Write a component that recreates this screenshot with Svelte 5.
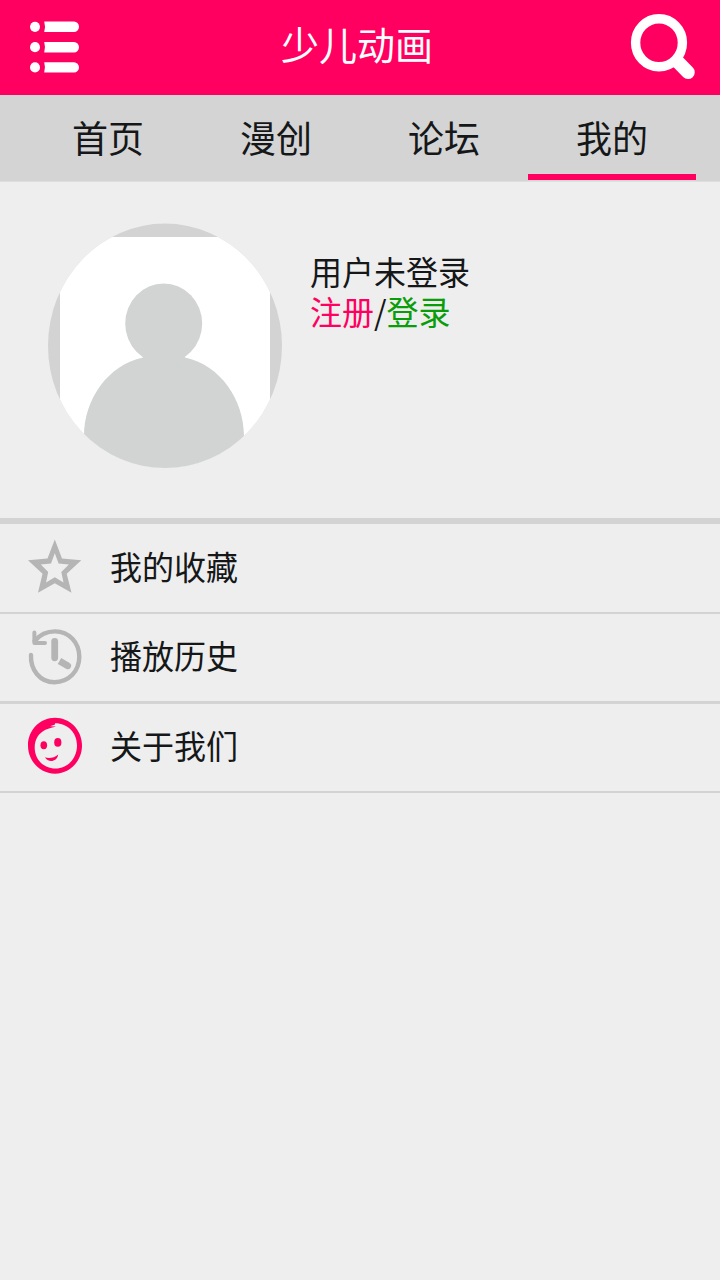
<script>
  const tabs = ['首页', '漫创', '论坛', '我的'];
  const active = 3;
  const items = [
    { icon: 'star', label: '我的收藏' },
    { icon: 'history', label: '播放历史' },
    { icon: 'face', label: '关于我们' }
  ];
</script>

<div class="page">
  <header>
    <svg class="menu" width="50" height="54" viewBox="0 0 50 54" fill="#fff">
      {#each [6.8, 27.2, 47.4] as y}
        <ellipse cx="5" cy={y} rx="5" ry="5.1" />
        <path d="M14.2 {y - 5.2}H44a5 5.2 0 0 1 0 10.4H14.2Q15.8 {y} 14.2 {y - 5.2}Z" />
      {/each}
    </svg>
    <h1><span class="tall">少儿动画</span></h1>
    <svg class="search" width="66" height="68" viewBox="0 0 66 68" fill="none" stroke="#fff">
      <path d="M46 47 58 59.3" stroke-width="13.5" stroke-linecap="round" />
      <ellipse cx="29" cy="29.7" rx="23.4" ry="24" stroke-width="9.4" fill="#ff0061" />
    </svg>
  </header>

  <nav>
    {#each tabs as tab, i}
      <div class="tab" class:active={i === active}><span class="tall">{tab}</span></div>
    {/each}
  </nav>

  <section class="profile">
    <svg width="234" height="245" viewBox="0 0 234 245">
      <defs>
        <clipPath id="round"><ellipse cx="117" cy="122.8" rx="117" ry="122.2" /></clipPath>
      </defs>
      <g clip-path="url(#round)">
        <rect width="234" height="245" fill="#d3d3d3" />
        <rect x="12" y="14" width="210" height="232" fill="#fff" />
        <g fill="#d2d4d3">
          <ellipse cx="115.7" cy="100.5" rx="38.5" ry="40" />
          <path d="M97 130H135L137 134.5C172 142 196 176 196 213V245H36V213C36 176 60 142 95 134.5Z" />
        </g>
      </g>
    </svg>
    <div class="user">
      <p><span class="tall">用户未登录</span></p>
      <p><span class="tall"><span class="register">注册</span>/<span class="login">登录</span></span></p>
    </div>
  </section>

  <ul>
    {#each items as item}
      <li>
        <svg width="54" height="58" viewBox="0 0 54 58">
          {#if item.icon === 'star'}
            <path fill="#b5b5b5" fill-rule="evenodd" d="M26.8 1.4 34 20.6 53.3 22.2 38.7 35.8 43.5 54.8 26.8 45.2 10 54.8 14.5 35.8 0 22.2 19.5 20.6ZM26.8 15.2 23 25.6 12.7 26.6 20.2 33.9 18 44.4 26.8 39.2 35.5 44.4 33.3 33.9 40.9 26.6 30.6 25.6Z" />
          {:else if item.icon === 'history'}
            <g fill="none" stroke="#b5b5b5" stroke-linecap="round" stroke-linejoin="round">
              <path d="M3 28C2.3 43 12 55.2 26.5 55.2S51.3 44 51.3 29.8 41 4.4 27 4.4C18.5 4.4 12 7.5 6.6 14" stroke-width="4.4" />
              <path d="M6.4 5.5V16H17" stroke-width="4" />
              <path d="M26.7 14.3V30.8" stroke-width="6.8" />
              <path d="M31.5 34 39 38.4" stroke-width="6.8" stroke-linecap="butt" />
              <path d="M39 38.4 39.8 38.9" stroke-width="6.6" />
            </g>
          {:else}
            <g fill="#ff0061">
              <path fill-rule="evenodd" d="M27 .8C42 .8 54 13 54 28.5S42 56.7 27 56.7 0 44 0 28.5 12 .8 27 .8ZM27 7.6 22 9.3 28 9.5 22.5 11 18 12.5C10.5 16 6.7 22.5 6.7 30.5 6.7 43 16 51.5 27.5 51.5 40 51.5 49 41 49 28.5 49 16 40 6.2 27 6.2Z" />
              <ellipse cx="15.8" cy="28.2" rx="3.3" ry="4" />
              <ellipse cx="29.8" cy="25.4" rx="3.6" ry="4.3" />
              <path d="M16.9 40.2C20.5 41.6 26.5 41 30.2 37.4 29 45.4 19.8 45.6 16.9 40.2Z" />
            </g>
          {/if}
        </svg>
        <span class="tall">{item.label}</span>
      </li>
    {/each}
  </ul>
</div>

<style>
  :global(body) { background: #eee; }
  .page {
    height: 1280px;
    background: #eee;
    color: #151718;
    font-family: "Noto Sans CJK SC", sans-serif;
    overflow: hidden;
  }
  h1, p, ul { margin: 0; padding: 0; font-weight: 400; }
  svg { display: block; flex: none; }
  .tall { display: inline-block; transform: scaleY(1.03); }
  header {
    box-sizing: border-box;
    height: 95px;
    padding: 0 24px 1px 30px;
    display: grid;
    grid-template-columns: 66px 1fr 66px;
    align-items: center;
    background: #ff0061;
    color: #fff;
  }
  h1 { font-size: 38px; line-height: 56px; text-align: center; padding: 0 12px 6px 0; }
  nav {
    box-sizing: border-box;
    height: 87px;
    padding: 0 24px;
    display: flex;
    background: #d4d4d4;
    border-bottom: 1px solid #dedede;
  }
  .tab {
    flex: 1;
    box-sizing: border-box;
    height: 85px;
    border-bottom: 6px solid transparent;
    font-size: 36px;
    line-height: 84px;
    text-align: center;
  }
  .active { border-color: #ff0061; }
  .profile {
    box-sizing: border-box;
    height: 342px;
    padding: 41px 48px 0;
    display: flex;
    gap: 28px;
    border-bottom: 6px solid #d3d3d3;
  }
  .user { padding-top: 28px; font-size: 32px; line-height: 40px; }
  .register { color: #ff0061; }
  .login { color: #0a9d0a; }
  ul { list-style: none; }
  li {
    box-sizing: border-box;
    height: 90px;
    padding: 0 0 3px 28px;
    display: flex;
    align-items: center;
    gap: 28px;
    border-bottom: 2px solid #d3d3d3;
    font-size: 32px;
    line-height: 48px;
  }
  li .tall { padding-bottom: 2px; }
  li:nth-child(2) { border-bottom-width: 3px; }
  li:last-child { height: 89px; }
</style>
